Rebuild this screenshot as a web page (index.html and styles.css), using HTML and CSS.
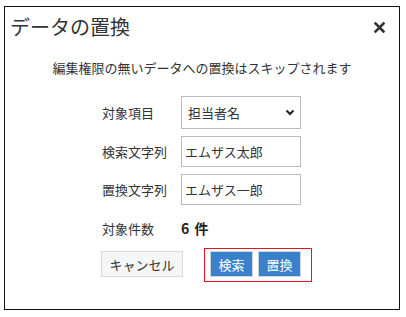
FILE: index.html
```html
<!DOCTYPE html>
<html>
<head>
    <title>データの置換</title>
    <link rel="stylesheet" href="styles.css">
</head>
<body>
    <div class="dialog">
        <div class="dialog-header">
            <span class="dialog-title">データの置換</span>
            <svg class="close-icon" width="11" height="11" viewBox="0 0 11 11">
                <path d="M1.5 1.5 L9.5 9.5 M9.5 1.5 L1.5 9.5" stroke="#333" stroke-width="2.6" stroke-linecap="square"/>
            </svg>
        </div>

        <p class="notice">編集権限の無いデータへの置換はスキップされます</p>

        <div class="form">
            <div class="row">
                <label>対象項目</label>
                <div class="select-box">
                    <span>担当者名</span>
                    <svg width="10" height="7" viewBox="0 0 10 7">
                        <path d="M1.5 1.5 L5 5 L8.5 1.5" fill="none" stroke="#222" stroke-width="2"/>
                    </svg>
                </div>
            </div>
            <div class="row">
                <label>検索文字列</label>
                <input class="text-box" type="text" value="エムザス太郎">
            </div>
            <div class="row">
                <label>置換文字列</label>
                <input class="text-box" type="text" value="エムザス一郎">
            </div>
            <div class="row count-row">
                <label>対象件数</label>
                <span class="count">6&nbsp;件</span>
            </div>
            <div class="row button-row">
                <button class="btn cancel-btn">キャンセル</button>
                <div class="action-group">
                    <button class="btn primary-btn">検索</button>
                    <button class="btn primary-btn">置換</button>
                </div>
            </div>
        </div>
    </div>
</body>
</html>
```

FILE: styles.css
```css
body {
    margin: 0;
    padding: 6px 0 0 4px;
    font-family: "Noto Sans CJK JP", "Noto Sans", sans-serif;
    color: #333;
    background-color: white;
}

.dialog {
    width: 394px;
    height: 302px;
    border: 1px solid #111;
    background-color: white;
}

.dialog-header {
    display: flex;
    justify-content: space-between;
    align-items: center;
    padding: 6px 14px 0 5px;
    height: 28px;
}

.dialog-title {
    font-size: 20px;
    line-height: 28px;
    color: #333;
}

.close-icon {
    display: block;
}

.notice {
    margin: 17px 0 0;
    font-size: 13px;
    line-height: 20px;
    text-align: center;
}

.form {
    width: 220px;
    margin: 18px 0 0 95px;
}

.row {
    display: flex;
    align-items: center;
    margin-bottom: 7px;
    font-size: 13px;
}

.row label {
    width: 79px;
    padding-left: 2px;
    flex-shrink: 0;
}

.select-box {
    display: flex;
    justify-content: space-between;
    align-items: center;
    box-sizing: border-box;
    width: 120px;
    height: 33px;
    padding: 0 5px 0 6px;
    border: 1px solid #bbb;
    background-color: white;
}

.text-box {
    box-sizing: border-box;
    width: 120px;
    height: 31px;
    margin: 0;
    padding: 0 3px;
    border: 1px solid #bbb;
    font-family: inherit;
    font-size: 13px;
    color: #333;
    outline: none;
}

.count-row {
    height: 32px;
    margin-bottom: 4px;
}

.count {
    font-size: 14px;
    font-weight: bold;
    color: #222;
    word-spacing: 2px;
}

.button-row {
    margin-bottom: 0;
}

.btn {
    box-sizing: border-box;
    flex-shrink: 0;
    height: 26px;
    margin: 0;
    padding: 0;
    white-space: nowrap;
    font-family: inherit;
    font-size: 13px;
    cursor: pointer;
}

.cancel-btn {
    width: 82px;
    margin-top: -2px;
    margin-left: 1px;
    background-color: #f5f6f8;
    border: 1px solid #d9d9d9;
    color: #333;
}

.action-group {
    display: flex;
    flex-shrink: 0;
    gap: 5px;
    margin-left: 21px;
    padding: 2px 10px 4px 5px;
    border: 1px solid #e8141c;
}

.primary-btn {
    width: 43px;
    background-color: #3a81cb;
    border: 1px solid #c9d6e4;
    color: white;
}
```
